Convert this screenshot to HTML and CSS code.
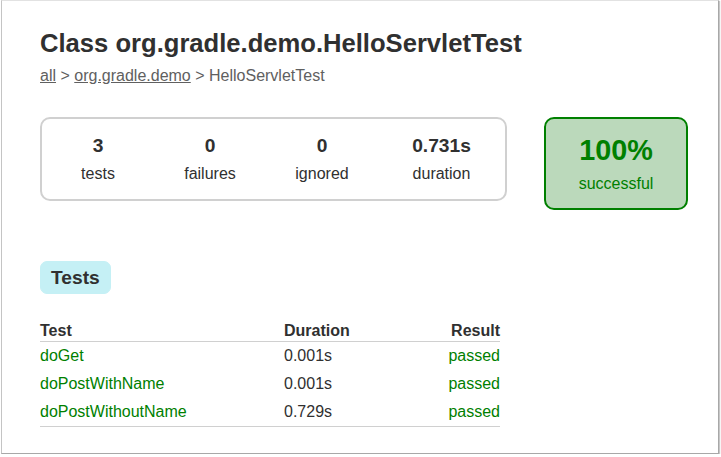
FILE: index.html
```
<!DOCTYPE html>
<html>
<head>
<meta charset="utf-8">
<title>Test results - Class org.gradle.demo.HelloServletTest</title>
<link rel="stylesheet" href="styles.css">
</head>
<body>
<div class="window">
  <div class="content">
    <h1 class="title">Class org.gradle.demo.HelloServletTest</h1>
    <div class="breadcrumbs"><a href="#">all</a> &gt; <a href="#">org.gradle.demo</a> &gt; HelloServletTest</div>

    <div class="summary">
      <div class="summary-group">
        <div class="info-box">
          <div class="counter">3</div>
          <p class="label">tests</p>
        </div>
        <div class="info-box">
          <div class="counter">0</div>
          <p class="label">failures</p>
        </div>
        <div class="info-box">
          <div class="counter">0</div>
          <p class="label">ignored</p>
        </div>
        <div class="info-box duration">
          <div class="counter">0.731s</div>
          <p class="label">duration</p>
        </div>
      </div>
      <div class="success-rate">
        <div class="percent">100%</div>
        <p class="label">successful</p>
      </div>
    </div>

    <div class="tab-links">
      <div class="tab-link selected"><h2>Tests</h2></div>
    </div>

    <table class="tests">
      <thead>
        <tr>
          <th class="col-test">Test</th>
          <th class="col-duration">Duration</th>
          <th class="col-result">Result</th>
        </tr>
      </thead>
      <tbody>
        <tr>
          <td class="success">doGet</td>
          <td>0.001s</td>
          <td class="success result">passed</td>
        </tr>
        <tr>
          <td class="success">doPostWithName</td>
          <td>0.001s</td>
          <td class="success result">passed</td>
        </tr>
        <tr>
          <td class="success">doPostWithoutName</td>
          <td>0.729s</td>
          <td class="success result">passed</td>
        </tr>
      </tbody>
    </table>
  </div>
</div>
</body>
</html>
```

FILE: styles.css
```
html, body {
  margin: 0;
  padding: 0;
  background: #ffffff;
}

body {
  font-family: "Liberation Sans", Arial, Helvetica, sans-serif;
  font-size: 16px;
  color: #303030;
}

.window {
  margin-left: 1px;
  width: 716px;
  height: 452px;
  border-left: 1px solid #c4c4c4;
  border-top: 1px solid #e2e2e2;
  border-right: 1px solid #a8a8a8;
  border-bottom: 1px solid #a8a8a8;
  box-shadow: 1px 1px 1px rgba(0, 0, 0, 0.22);
  background: #ffffff;
}

.content {
  padding: 27px 0 0 38px;
}

.title {
  margin: 0;
  font-size: 25.6px;
  line-height: 30px;
  font-weight: bold;
  white-space: nowrap;
}

.breadcrumbs {
  margin-top: 8px;
  line-height: 20px;
  color: #606060;
}

.breadcrumbs a {
  color: #606060;
  text-decoration: underline;
}

.summary {
  display: flex;
  align-items: flex-start;
  margin-top: 31px;
}

.summary-group {
  display: flex;
  border: 2px solid #d0d0d0;
  border-radius: 10px;
}

.info-box {
  width: 112px;
  padding: 16px 0 16px;
  text-align: center;
}

.info-box.duration {
  width: 127px;
}

.counter {
  font-size: 19.2px;
  font-weight: bold;
  margin-bottom: 8px;
}

.label {
  margin: 0;
}

.success-rate {
  width: 140px;
  margin-left: 37px;
  padding: 15px 0 15px;
  text-align: center;
  border: 2px solid #008000;
  border-radius: 10px;
  background: #bbd9bb;
  color: #008000;
}

.percent {
  font-size: 28.8px;
  font-weight: bold;
  margin-bottom: 8px;
}

.tab-links {
  display: flex;
  margin-top: 51px;
}

.tab-link {
  padding: 5px 10px;
  border: 1px solid #c5f0f5;
  border-radius: 7px;
  background: #c5f0f5;
}

.tab-link h2 {
  margin: 0;
  font-size: 19.2px;
  line-height: 21px;
  font-weight: bold;
  white-space: nowrap;
}

.tests {
  margin-top: 27px;
  border-collapse: collapse;
  border-bottom: 1px solid #d0d0d0;
}

.tests th {
  padding: 1px 0;
  text-align: left;
  font-weight: bold;
  white-space: nowrap;
  border-bottom: 1px solid #d0d0d0;
}

.tests td {
  padding: 5px 0;
  white-space: nowrap;
}

.col-test {
  width: 244px;
}

.col-duration {
  width: 150px;
}

.col-result {
  width: 66px;
}

.tests th.col-result,
.tests td.result {
  text-align: right;
}

.success {
  color: #008000;
}
```
